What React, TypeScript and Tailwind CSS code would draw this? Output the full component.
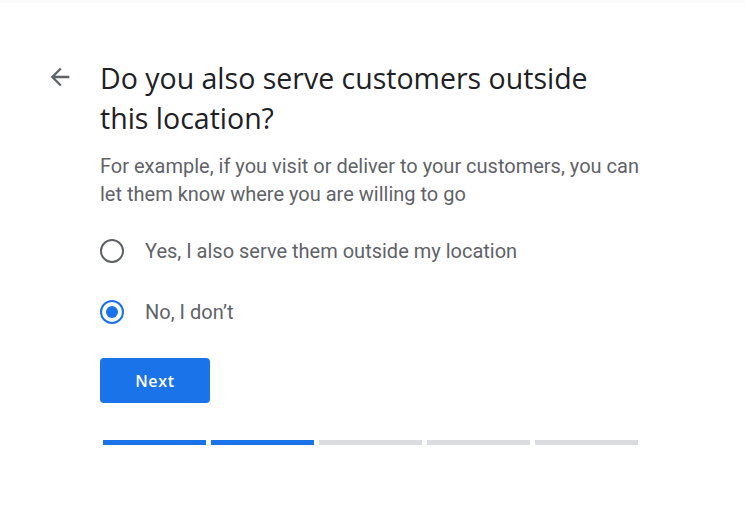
import React, { useState } from 'react';

const options = [
  { id: 'yes', label: 'Yes, I also serve them outside my location' },
  { id: 'no', label: 'No, I don’t' },
];

const steps = [true, true, false, false, false];

export default function App() {
  const [choice, setChoice] = useState('no');

  return (
    <div className="min-h-[531px] w-full bg-white font-['Roboto',sans-serif]">
      <div className="h-[3px] bg-[#fafafa]" />
      <div className="flex pt-[55px]">
        {/* Back */}
        <div className="w-[100px] shrink-0 pl-[46px] pt-[5px]">
          <button className="flex h-[28px] w-[28px] items-center justify-center text-[#5f6368]">
            <svg width="28" height="28" viewBox="0 0 24 24" fill="currentColor">
              <path d="M20 11H7.83l5.59-5.59L12 4l-8 8 8 8 1.41-1.41L7.83 13H20v-2z" />
            </svg>
          </button>
        </div>

        <div className="w-[540px]">
          <h1 className="max-w-[520px] font-['Open_Sans',sans-serif] text-[28.5px] leading-[40px] text-[#202124]">
            Do you also serve customers outside this location?
          </h1>
          <p className="mt-[14px] text-[20px] leading-[28px] text-[#5f6368]">
            For example, if you visit or deliver to your customers, you can let them know where you are willing to go
          </p>

          <div className="mt-[23px] flex flex-col gap-[21px]">
            {options.map((o) => {
              const on = choice === o.id;
              return (
                <label key={o.id} className="flex h-[40px] cursor-pointer items-center">
                  <span
                    onClick={() => setChoice(o.id)}
                    className={
                      on
                        ? 'flex h-[24px] w-[24px] items-center justify-center rounded-full border-[2.5px] border-[#1a73e8]'
                        : 'flex h-[24px] w-[24px] items-center justify-center rounded-full border-[2.5px] border-[#5f6368]'
                    }
                  >
                    {on && <span className="h-[12px] w-[12px] rounded-full bg-[#1a73e8]" />}
                  </span>
                  <span onClick={() => setChoice(o.id)} className="ml-[21px] text-[20px] text-[#5f6368]">
                    {o.label}
                  </span>
                </label>
              );
            })}
          </div>

          <button className="mt-[26px] h-[45px] w-[110px] rounded-[4px] bg-[#1a73e8] font-['Open_Sans',sans-serif] text-[16px] font-semibold tracking-[0.7px] text-white">
            Next
          </button>

          <div className="mt-[37px] flex gap-[5px] pl-[3px]">
            {steps.map((done, i) => (
              <div key={i} className={done ? 'h-[5px] w-[103px] bg-[#1a73e8]' : 'h-[5px] w-[103px] bg-[#dadce0]'} />
            ))}
          </div>
        </div>
      </div>
    </div>
  );
}
